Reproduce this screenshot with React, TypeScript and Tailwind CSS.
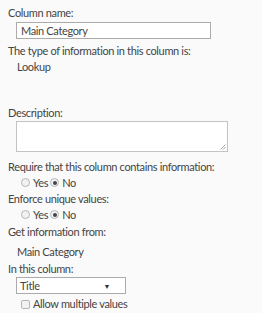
import React from "react";

function Radio({ checked, label }: { checked?: boolean; label: string }) {
  return (
    <span className="flex items-center gap-[3px]">
      <span className="flex h-[9px] w-[9px] items-center justify-center rounded-full border border-[#b5b5b5] bg-[#f2f2f2]">
        {checked && <span className="h-[4px] w-[4px] rounded-full bg-[#444]" />}
      </span>
      <span>{label}</span>
    </span>
  );
}

function RadioRow() {
  return (
    <div className="flex h-[15px] items-center gap-[2px] pl-[13px]">
      <Radio label="Yes" />
      <Radio checked label="No" />
    </div>
  );
}

export default function App() {
  return (
    <div
      className="h-[313px] w-[262px] bg-[#fafafa] pl-[8px] text-[11px] leading-[16px] tracking-[-0.35px] text-[#444]"
      style={{ fontFamily: "Lato, sans-serif" }}
    >
      <div className="pt-[5px]">Column name:</div>
      <div className="ml-[8px] mt-[1px] flex h-[17px] w-[195px] items-center border border-[#ababab] bg-white pl-[4px]">
        Main Category
      </div>
      <div className="mt-[4px]">The type of information in this column is:</div>
      <div className="pl-[9px]">Lookup</div>
      <div className="mt-[30px]">Description:</div>
      <div className="relative ml-[8px] h-[31px] w-[212px] border border-[#c3c3c3] bg-white">
        <svg className="absolute bottom-[1px] right-[1px]" width="6" height="6" viewBox="0 0 6 6">
          <path d="M5.5 0.5 L0.5 5.5 M5.5 3 L3 5.5" stroke="#a8a8a8" strokeWidth="1" />
        </svg>
      </div>
      <div className="mt-[7px]">Require that this column contains information:</div>
      <RadioRow />
      <div className="mt-[1px]">Enforce unique values:</div>
      <RadioRow />
      <div className="mt-[2px]">Get information from:</div>
      <div className="mt-[4px] pl-[9px]">Main Category</div>
      <div className="mt-[1px]">In this column:</div>
      <div className="ml-[8px] flex h-[17px] w-[110px] items-center justify-between border border-[#ababab] bg-white pl-[3px] pr-[15px]">
        <span>Title</span>
        <span className="text-[7px] text-[#333]">▼</span>
      </div>
      <div className="mt-[2px] flex h-[16px] items-center gap-[3px] pl-[13px]">
        <span className="h-[9px] w-[9px] rounded-[2px] border border-[#b5b5b5] bg-[#f2f2f2]" />
        <span>Allow multiple values</span>
      </div>
    </div>
  );
}
